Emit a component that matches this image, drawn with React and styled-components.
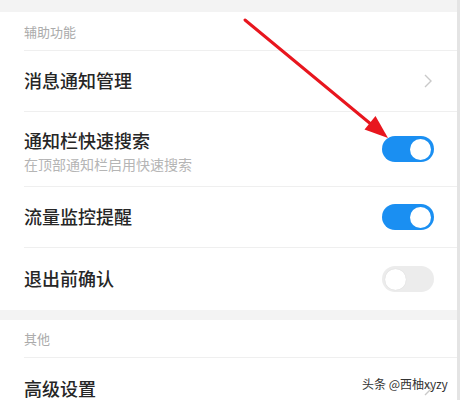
import React from "react";
import styled, { createGlobalStyle } from "styled-components";

const Global = createGlobalStyle`
  html, body { margin: 0; padding: 0; background: #ffffff; }
  body { font-family: "Noto Sans CJK SC", "Noto Sans", sans-serif; }
`;

const Screen = styled.div`
  position: relative;
  width: 460px;
  height: 400px;
  overflow: hidden;
  display: flex;
  background: #ffffff;
`;

const Page = styled.div`
  flex: 1;
  display: flex;
  flex-direction: column;
  background: #ffffff;
`;

const Gutter = styled.div`
  width: 3px;
  background: #e4e4e4;
`;

const Band = styled.div`
  height: ${(p) => p.$h}px;
  flex-shrink: 0;
  background: #f3f3f3;
`;

const Section = styled.section`
  display: flex;
  flex-direction: column;
  background: #ffffff;
`;

const Header = styled.div`
  height: ${(p) => p.$h}px;
  margin-left: 24px;
  display: flex;
  align-items: center;
  box-sizing: border-box;
  border-bottom: 1px solid #efefef;
  font-size: 13px;
  color: #ababab;
  flex-shrink: 0;
`;

const Row = styled.div`
  height: ${(p) => p.$h}px;
  margin-left: 24px;
  padding-right: 23px;
  box-sizing: border-box;
  display: flex;
  align-items: center;
  justify-content: space-between;
  border-bottom: ${(p) => (p.$last ? "none" : "1px solid #efefef")};
  flex-shrink: 0;
`;

const Texts = styled.div`
  display: flex;
  flex-direction: column;
  padding-top: 3px;
`;

const Title = styled.div`
  font-size: 18px;
  line-height: 24px;
  font-weight: 500;
  color: #262626;
  margin-bottom: 2px;
`;

const Sub = styled.div`
  font-size: 14px;
  line-height: 20px;
  color: #b5b5b5;
`;

const Track = styled.div`
  width: 52px;
  height: 26px;
  border-radius: 13px;
  background: ${(p) => (p.$on ? "#1a8ff2" : "#ececec")};
  display: flex;
  align-items: center;
  justify-content: ${(p) => (p.$on ? "flex-end" : "flex-start")};
  padding: 0 3px;
  box-sizing: border-box;
  flex-shrink: 0;
`;

const Knob = styled.div`
  width: 21px;
  height: 21px;
  border-radius: 50%;
  background: #ffffff;
  box-shadow: ${(p) => (p.$on ? "none" : "0 0 1px rgba(0,0,0,0.15)")};
`;

const Chevron = styled.svg`
  width: 8px;
  height: 14px;
  margin-right: 2px;
  flex-shrink: 0;
`;

const Overlay = styled.svg`
  position: absolute;
  left: 0;
  top: 0;
  width: 460px;
  height: 400px;
  pointer-events: none;
`;

const Watermark = styled.div`
  position: absolute;
  left: 362px;
  top: 376px;
  font-size: 12px;
  line-height: 16px;
  color: #333333;
  white-space: nowrap;
`;

function Switch({ on }) {
  return (
    <Track $on={on}>
      <Knob $on={on} />
    </Track>
  );
}

function Arrow() {
  return (
    <Chevron viewBox="0 0 8 14">
      <polyline points="1,1 7,7 1,13" fill="none" stroke="#c9c9c9" strokeWidth="1.4" />
    </Chevron>
  );
}

export default function App() {
  return (
    <>
      <Global />
      <Screen>
        <Page>
          <Band $h={12} />
          <Section>
            <Header $h={39}>辅助功能</Header>
            <Row $h={61}>
              <Title>消息通知管理</Title>
              <Arrow />
            </Row>
            <Row $h={75}>
              <Texts>
                <Title>通知栏快速搜索</Title>
                <Sub>在顶部通知栏启用快速搜索</Sub>
              </Texts>
              <Switch on />
            </Row>
            <Row $h={61}>
              <Title>流量监控提醒</Title>
              <Switch on />
            </Row>
            <Row $h={62} $last>
              <Title>退出前确认</Title>
              <Switch on={false} />
            </Row>
          </Section>
          <Band $h={10} />
          <Section>
            <Header $h={38}>其他</Header>
            <Row $h={62} $last>
              <Title>高级设置</Title>
              <Arrow />
            </Row>
          </Section>
        </Page>
        <Gutter />
        <Overlay viewBox="0 0 460 400">
          <line x1="245" y1="20" x2="372" y2="125" stroke="#e8161e" strokeWidth="3" strokeLinecap="round" />
          <polygon points="388,138 364.5,129.5 375.5,116" fill="#e8161e" />
        </Overlay>
        <Watermark>头条 @西柚xyzy</Watermark>
      </Screen>
    </>
  );
}
